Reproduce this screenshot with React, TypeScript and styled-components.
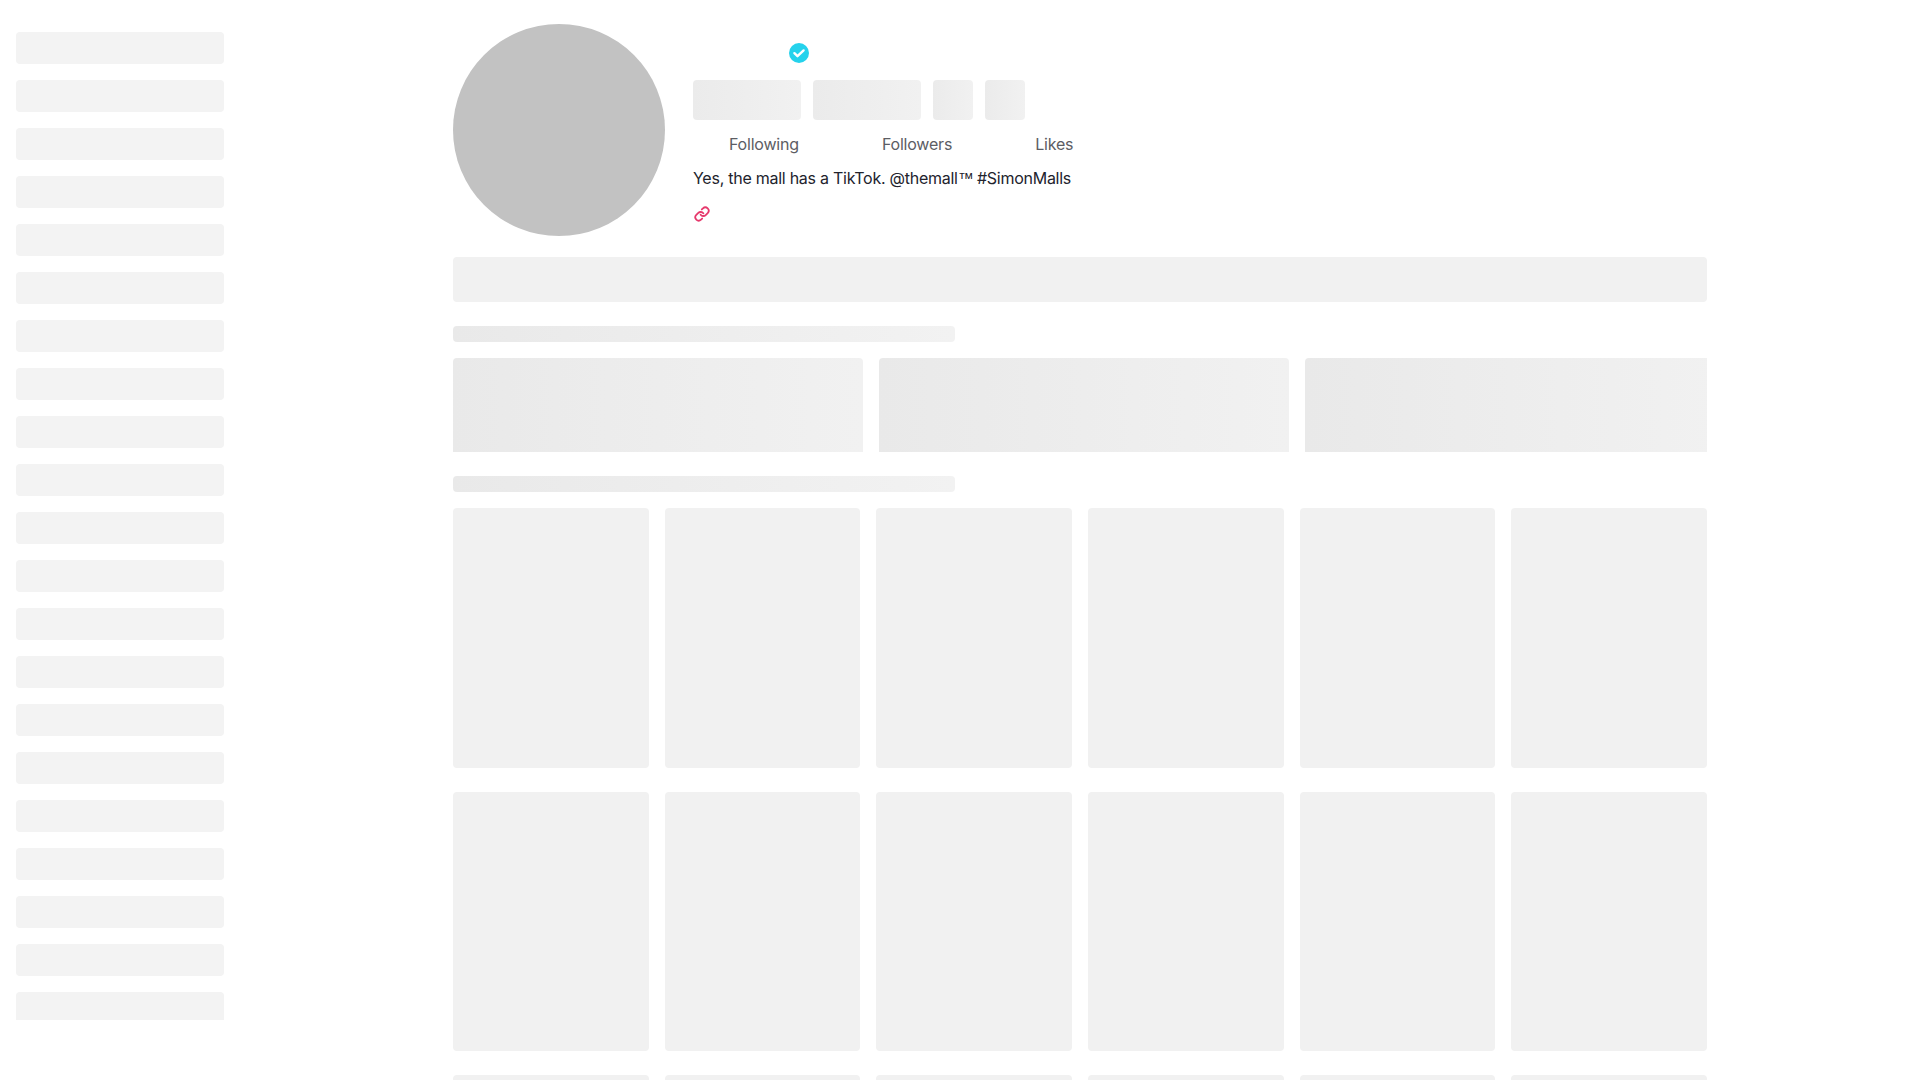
import React from "react";
import styled, { createGlobalStyle } from "styled-components";
import { Link } from "lucide-react";

const GlobalStyle = createGlobalStyle`
    html, body {
        margin: 0;
        padding: 0;
        height: 100%;
        overflow: hidden;
        background: #fff;
        font-family: Inter, "Liberation Sans", sans-serif;
    }
    * {
        box-sizing: border-box;
    }
`;

const Page = styled.div`
    display: flex;
    align-items: flex-start;
    height: 1080px;
    overflow: hidden;
`;

const Sidebar = styled.aside`
    flex: 0 0 240px;
    height: 1020px;
    padding: 32px 16px 0;
    display: flex;
    flex-direction: column;
    gap: 16px;
    overflow: hidden;
`;

const SidebarRow = styled.div`
    flex: 0 0 32px;
    background: #f3f3f3;
    border-radius: 4px;
`;

const Main = styled.main`
    width: 1254px;
    margin-left: 213px;
    padding-top: 24px;
`;

const Header = styled.header`
    display: flex;
    gap: 28px;
`;

const Avatar = styled.div`
    width: 212px;
    height: 212px;
    border-radius: 50%;
    background: #c2c2c2;
    flex: none;
`;

const Info = styled.div`
    display: flex;
    flex-direction: column;
    padding-top: 19px;
`;

const NameRow = styled.div`
    height: 20px;
    padding-left: 96px;
`;

const Actions = styled.div`
    display: flex;
    gap: 12px;
    margin-top: 17px;
`;

const ActionSkeleton = styled.div<{ $wide?: boolean }>`
    width: ${({ $wide }) => ($wide ? "108px" : "40px")};
    height: 40px;
    border-radius: 4px;
    background: linear-gradient(90deg, #ebebeb, #f1f1f1);
`;

const Stats = styled.div`
    display: flex;
    margin-top: 13px;
    font-size: 16px;
    line-height: 22px;
    letter-spacing: -0.2px;
    color: #5c5d64;
`;

const Stat = styled.span`
    padding-left: 36px;
    margin-right: 47px;
`;

const Bio = styled.div`
    margin-top: 12px;
    font-size: 16px;
    line-height: 22px;
    letter-spacing: -0.26px;
    color: #22232d;
    white-space: nowrap;
`;

const Trademark = styled.span`
    font-family: "Liberation Sans", sans-serif;
    letter-spacing: -1px;
`;

const LinkRow = styled.div`
    display: flex;
    margin-top: 16px;
    padding-left: 1px;
    color: #e6396c;
`;

const TabBar = styled.div`
    height: 45px;
    margin-top: 21px;
    background: #f1f1f1;
    border-radius: 4px;
`;

const TitleBar = styled.div`
    width: 40%;
    height: 16px;
    border-radius: 4px;
    background: linear-gradient(90deg, #e9e9e9, #f2f2f2);
`;

const PlaylistRow = styled.div`
    display: flex;
    gap: 16px;
    height: 94px;
    margin-top: 16px;
    overflow: hidden;
`;

const PlaylistCard = styled.div`
    flex: 0 0 410px;
    height: 100px;
    border-radius: 4px;
    background: linear-gradient(90deg, #e9e9e9, #f1f1f1);
`;

const VideoGrid = styled.div`
    display: grid;
    grid-template-columns: repeat(6, 1fr);
    gap: 24px 16px;
    margin-top: 16px;
`;

const VideoCard = styled.div`
    height: 259.6px;
    border-radius: 4px;
    background: #f1f1f1;
`;

const Section = styled.section`
    margin-top: 24px;
`;

const VerifiedBadge = () => (
    <svg width="20" height="20" viewBox="0 0 20 20">
        <circle cx="10" cy="10" r="10" fill="#25d2ec" />
        <path
            d="M5.4 10.2 8.5 13.2 14.6 7.4"
            fill="none"
            stroke="#fff"
            strokeWidth="2.4"
            strokeLinecap="round"
            strokeLinejoin="round"
        />
    </svg>
);

export default function App() {
    return (
        <>
            <GlobalStyle />
            <Page>
                <Sidebar>
                    {Array.from({ length: 21 }, (_, i) => (
                        <SidebarRow key={i} />
                    ))}
                </Sidebar>
                <Main>
                    <Header>
                        <Avatar />
                        <Info>
                            <NameRow>
                                <VerifiedBadge />
                            </NameRow>
                            <Actions>
                                <ActionSkeleton $wide />
                                <ActionSkeleton $wide />
                                <ActionSkeleton />
                                <ActionSkeleton />
                            </Actions>
                            <Stats>
                                <Stat>Following</Stat>
                                <Stat>Followers</Stat>
                                <Stat>Likes</Stat>
                            </Stats>
                            <Bio>
                                Yes, the mall has a TikTok. @themall<Trademark>™</Trademark> #SimonMalls
                            </Bio>
                            <LinkRow>
                                <Link size={16} strokeWidth={2.7} />
                            </LinkRow>
                        </Info>
                    </Header>
                    <TabBar />
                    <Section>
                        <TitleBar />
                        <PlaylistRow>
                            <PlaylistCard />
                            <PlaylistCard />
                            <PlaylistCard />
                        </PlaylistRow>
                    </Section>
                    <Section>
                        <TitleBar />
                        <VideoGrid>
                            {Array.from({ length: 18 }, (_, i) => (
                                <VideoCard key={i} />
                            ))}
                        </VideoGrid>
                    </Section>
                </Main>
            </Page>
        </>
    );
}
